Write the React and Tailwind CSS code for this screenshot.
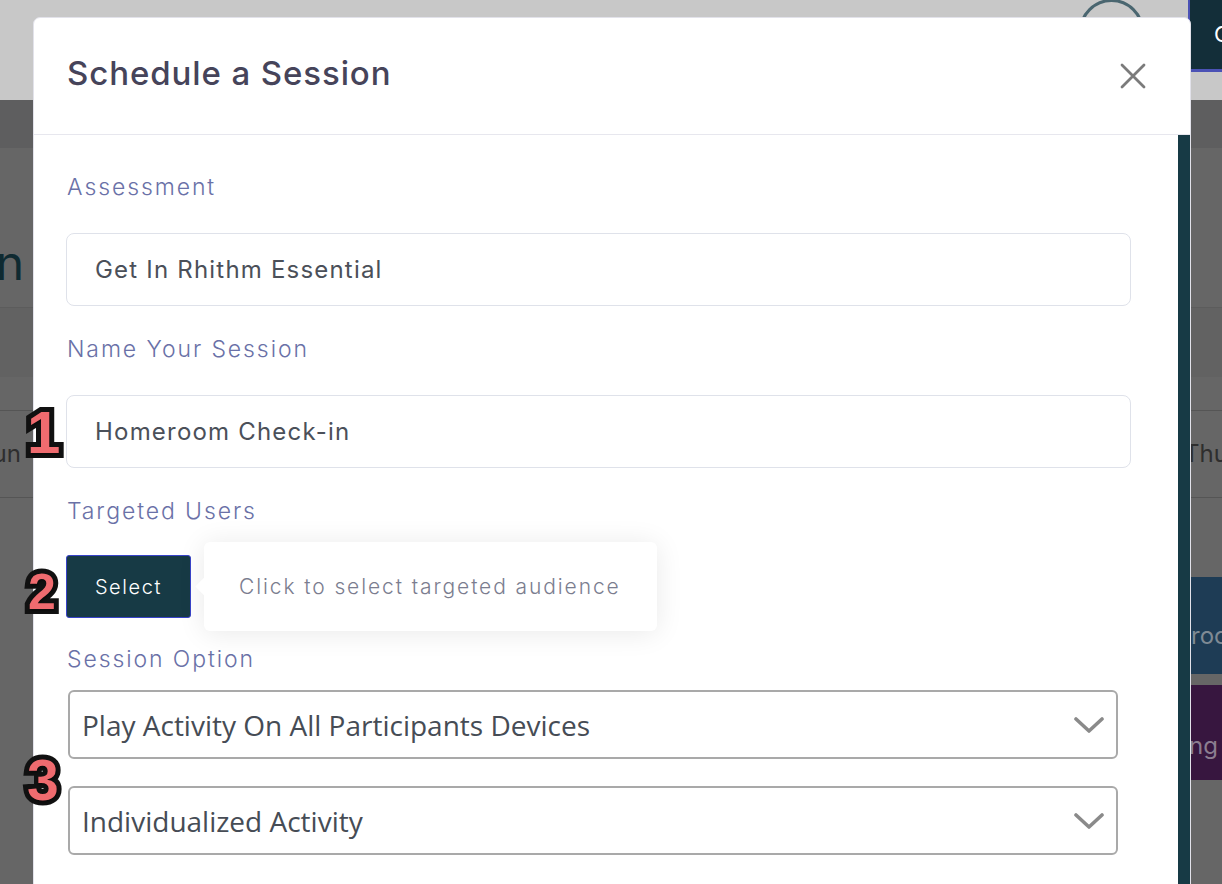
import React from "react";

const sans = { fontFamily: "Inter, 'Noto Sans', sans-serif" };

function Chevron() {
  return (
    <svg width="30" height="18" viewBox="0 0 30 18" fill="none">
      <path d="M2 3 L15 15 L28 3" stroke="#8a8a8a" strokeWidth="3.6" strokeLinecap="round" strokeLinejoin="round" />
    </svg>
  );
}

function Num({ children, className }) {
  return (
    <div
      className={
        "absolute font-['Liberation_Sans',Arial,sans-serif] font-bold text-[#ef6b6f] leading-none [-webkit-text-stroke:10px_#111] [paint-order:stroke_fill] [text-shadow:1px_2px_2px_rgba(0,0,0,0.35)] " +
        className
      }
    >
      {children}
    </div>
  );
}

const labelCls = "block text-[23px] leading-[32px] font-light tracking-[1.9px] text-[#6a71a7] pl-[1px]";
const inputCls = "h-[73px] border border-[#dfe2ea] rounded-[8px] px-[28px] flex items-center text-[24px] tracking-[1.2px] text-[#4b5059]";
const selectCls = "h-[69px] border-2 border-[#a9a9a9] rounded-[6px] pl-[12px] pr-[12px] flex items-center justify-between text-[28px] text-[#464c55]";

export default function App() {
  return (
    <div className="relative w-[1222px] h-[884px] overflow-hidden bg-[#666666] font-['Inter',sans-serif]">
      {/* dimmed background page */}
      <div className="flex flex-col h-full">
        <div className="relative h-[100px] bg-[#c8c8c8] flex justify-end items-start">
          <div className="absolute left-[1079px] top-[-1px] w-[65px] h-[65px] rounded-full border-[3px] border-[#4a6670]" />
          <div className="w-[34px] h-[72px] bg-[#132e39] border-l-2 border-b-[3px] border-[#4b52b5] overflow-hidden flex items-center pl-[24px]">
            <span className="text-white text-[22px] whitespace-nowrap">Create</span>
          </div>
        </div>
        <div className="h-[48px] bg-[#5e5e5f]" />
        <div className="h-[159px] flex items-end pb-[20px]">
          <div className="w-[24px] overflow-hidden flex justify-end">
            <span className="text-[48px] leading-[48px] text-[#0f2a31] whitespace-nowrap">Session</span>
          </div>
        </div>
        <div className="h-[70px] bg-[#626262] border-t border-[#5c5c5c]" />
        <div className="h-[33px]" />
        <div className="h-[88px] border-y border-[#555555] flex justify-between items-center">
          <div className="w-[21px] overflow-hidden flex justify-end">
            <span className="text-[24px] text-[#2e2e2e] whitespace-nowrap">Sun</span>
          </div>
          <div className="w-[38px] overflow-hidden">
            <span className="text-[24px] text-[#2e2e2e] whitespace-nowrap">Thu</span>
          </div>
        </div>
        <div className="flex-1 flex justify-end">
          <div className="w-[31px] flex flex-col pt-[79px] gap-[11px] overflow-hidden">
            <div className="h-[97px] bg-[#1e3c55] flex items-end pb-[20px]">
              <span className="text-[24px] text-[#7f8a94] whitespace-nowrap">room</span>
            </div>
            <div className="h-[95px] bg-[#37163f] flex items-end pb-[16px] justify-end">
              <span className="text-[24px] text-[#8b7d90] whitespace-nowrap pr-[4px]">ng</span>
            </div>
          </div>
        </div>
      </div>

      {/* modal */}
      <div className="absolute left-[33px] top-[17px] w-[1158px] h-[890px] bg-white rounded-t-[7px] border border-[#e2e2ea] overflow-hidden flex flex-col" style={sans}>
        <div className="h-[117px] shrink-0 border-b border-[#e7e7ee] flex items-center justify-between pl-[33px] pr-[44px]">
          <h2 className="text-[33px] font-medium text-[#46445a] tracking-[0.9px] -mt-[4px]">Schedule a Session</h2>
          <svg width="26" height="26" viewBox="0 0 26 26">
            <path d="M2 2 L24 24 M24 2 L2 24" stroke="#7b7b7b" strokeWidth="2.8" strokeLinecap="round" />
          </svg>
        </div>
        <div className="flex flex-1">
          <div className="flex-1 pl-[32px] pr-[47px] pt-[36px] flex flex-col">
            <label className={labelCls}>Assessment</label>
            <div className={"mt-[30px] " + inputCls}>Get In Rhithm Essential</div>
            <label className={"mt-[27px] " + labelCls}>Name Your Session</label>
            <div className={"mt-[30px] " + inputCls}>Homeroom Check-in</div>
            <label className={"mt-[27px] " + labelCls}>Targeted Users</label>
            <div className="mt-[15px] flex items-center h-[89px]">
              <button className="w-[125px] h-[63px] bg-[#173a45] border border-[#3843c9] rounded-[3px] text-white text-[20px] tracking-[1.6px] font-light">
                Select
              </button>
              <div className="relative ml-[13px] w-[453px] h-[89px] bg-white rounded-[6px] shadow-[0_2px_28px_rgba(0,0,0,0.09)] flex items-center pl-[35px] text-[21px] tracking-[1.9px] font-light text-[#7b7d8f]">
                <div className="absolute left-[-6px] top-[38px] w-[13px] h-[13px] bg-white rotate-45" />
                <span className="relative whitespace-nowrap">Click to select targeted audience</span>
              </div>
            </div>
            <label className={"mt-[12px] " + labelCls}>Session Option</label>
            <div className="mt-[15px] pl-[2px] pr-[13px] flex flex-col gap-[27px] font-['Open_Sans',sans-serif]">
              <div className={selectCls}>
                <span>Play Activity On All Participants Devices</span>
                <Chevron />
              </div>
              <div className={selectCls}>
                <span>Individualized Activity</span>
                <Chevron />
              </div>
            </div>
          </div>
          <div className="w-[12px] bg-[#173a45]" />
        </div>
      </div>

      {/* annotation numbers */}
      <Num className="left-[27px] top-[403px] text-[60px]">1</Num>
      <Num className="left-[28px] top-[567px] text-[50px]">2</Num>
      <Num className="left-[27px] top-[752px] text-[57px]">3</Num>
    </div>
  );
}
